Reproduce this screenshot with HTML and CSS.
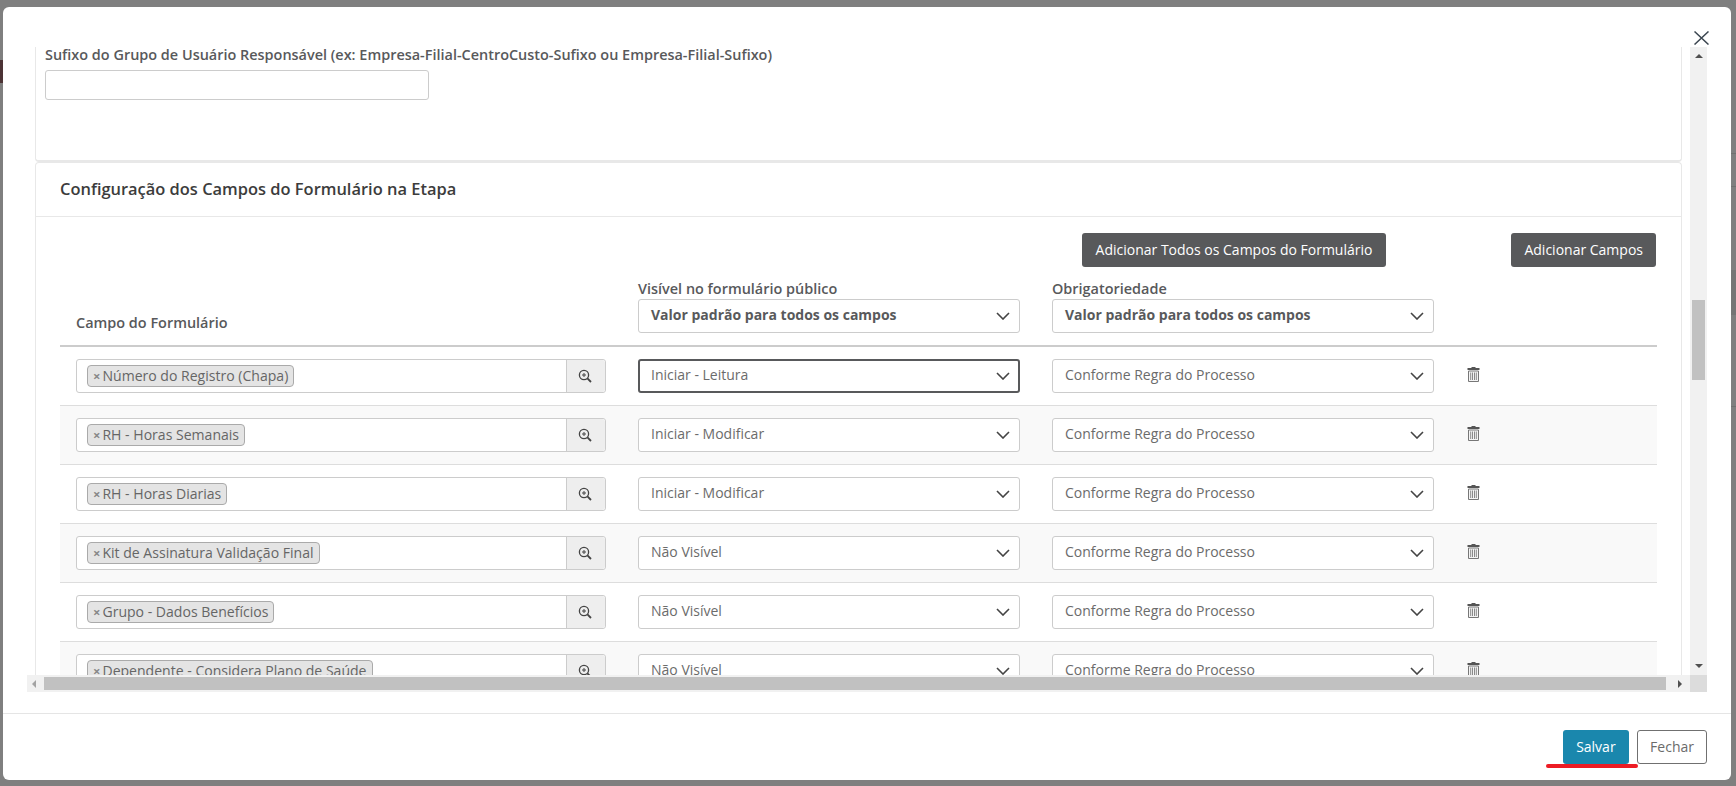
FILE: index.html
```html
<!DOCTYPE html>
<html lang="pt-BR">
<head>
<meta charset="utf-8">
<title>Configuração dos Campos do Formulário na Etapa</title>
<link rel="stylesheet" href="styles.css">
</head>
<body>
<svg class="defs" width="0" height="0" aria-hidden="true">
  <symbol id="chev" viewBox="0 0 14 8"><path d="M1 1l6 6 6-6" fill="none" stroke="currentColor" stroke-width="1.6"/></symbol>
  <symbol id="zoom" viewBox="0 0 14 14"><circle cx="6" cy="6" r="4.6" fill="none" stroke="currentColor" stroke-width="1.3"/><path d="M6 4v4M4 6h4" stroke="currentColor" stroke-width="1"/><path d="M9.4 9.4l3.6 3.6" stroke="currentColor" stroke-width="1.8"/></symbol>
  <symbol id="trash" viewBox="0 0 13 16"><path d="M4.5 1h4v1h4v2H.5V2h4z" fill="#555"/><path d="M1.5 5h10v10.500h-10z" fill="#f4f4f4" stroke="#777"/><path d="M3.700 6.500v7.500M5.500 6.500v7.500M7.500 6.500v7.500M9.300 6.500v7.500" stroke="#8a8a8a"/></symbol>
</svg>

<div class="bg-mark bg-left"></div>
<div class="bg-mark bg-right"></div>
<div class="bg-line bg-l1"></div>
<div class="bg-line bg-l2"></div>
<div class="bg-line bg-l3"></div>

<main class="modal">
  <header class="modal-head">
    <svg class="close" viewBox="0 0 15 14" aria-label="Fechar"><path d="M.5.500l14 13M14.500.500l-14 13" fill="none" stroke="#3b4650" stroke-width="1.500"/></svg>
  </header>

  <div class="scroll-area">
    <div class="viewport">
      <section class="panel panel-top">
        <label class="field-label">Sufixo do Grupo de Usuário Responsável (ex: Empresa-Filial-CentroCusto-Sufixo ou Empresa-Filial-Sufixo)</label>
        <div class="text-input"></div>
      </section>

      <section class="panel panel-fields">
        <h2 class="panel-title">Configuração dos Campos do Formulário na Etapa</h2>
        <div class="panel-body">
          <div class="toolbar">
            <button class="btn btn-dark btn-wide">Adicionar Todos os Campos do Formulário</button>
            <button class="btn btn-dark">Adicionar Campos</button>
          </div>

          <div class="row row-head">
            <div class="head-label head-first">Campo do Formulário</div>
            <div>
              <div class="head-label">Visível no formulário público</div>
              <div class="select select-strong"><span>Valor padrão para todos os campos</span><svg class="chev"><use href="#chev"/></svg></div>
            </div>
            <div>
              <div class="head-label">Obrigatoriedade</div>
              <div class="select select-strong"><span>Valor padrão para todos os campos</span><svg class="chev"><use href="#chev"/></svg></div>
            </div>
            <div></div>
          </div>

          <div class="row">
            <div class="lookup"><div class="lookup-main"><span class="tag"><span class="tag-x">×</span>Número do Registro (Chapa)</span></div><div class="lookup-btn"><svg class="zoom"><use href="#zoom"/></svg></div></div>
            <div class="select select-focus"><span>Iniciar - Leitura</span><svg class="chev"><use href="#chev"/></svg></div>
            <div class="select"><span>Conforme Regra do Processo</span><svg class="chev"><use href="#chev"/></svg></div>
            <svg class="trash"><use href="#trash"/></svg>
          </div>
          <div class="row">
            <div class="lookup"><div class="lookup-main"><span class="tag"><span class="tag-x">×</span>RH - Horas Semanais</span></div><div class="lookup-btn"><svg class="zoom"><use href="#zoom"/></svg></div></div>
            <div class="select"><span>Iniciar - Modificar</span><svg class="chev"><use href="#chev"/></svg></div>
            <div class="select"><span>Conforme Regra do Processo</span><svg class="chev"><use href="#chev"/></svg></div>
            <svg class="trash"><use href="#trash"/></svg>
          </div>
          <div class="row">
            <div class="lookup"><div class="lookup-main"><span class="tag"><span class="tag-x">×</span>RH - Horas Diarias</span></div><div class="lookup-btn"><svg class="zoom"><use href="#zoom"/></svg></div></div>
            <div class="select"><span>Iniciar - Modificar</span><svg class="chev"><use href="#chev"/></svg></div>
            <div class="select"><span>Conforme Regra do Processo</span><svg class="chev"><use href="#chev"/></svg></div>
            <svg class="trash"><use href="#trash"/></svg>
          </div>
          <div class="row">
            <div class="lookup"><div class="lookup-main"><span class="tag"><span class="tag-x">×</span>Kit de Assinatura Validação Final</span></div><div class="lookup-btn"><svg class="zoom"><use href="#zoom"/></svg></div></div>
            <div class="select"><span>Não Visível</span><svg class="chev"><use href="#chev"/></svg></div>
            <div class="select"><span>Conforme Regra do Processo</span><svg class="chev"><use href="#chev"/></svg></div>
            <svg class="trash"><use href="#trash"/></svg>
          </div>
          <div class="row">
            <div class="lookup"><div class="lookup-main"><span class="tag"><span class="tag-x">×</span>Grupo - Dados Benefícios</span></div><div class="lookup-btn"><svg class="zoom"><use href="#zoom"/></svg></div></div>
            <div class="select"><span>Não Visível</span><svg class="chev"><use href="#chev"/></svg></div>
            <div class="select"><span>Conforme Regra do Processo</span><svg class="chev"><use href="#chev"/></svg></div>
            <svg class="trash"><use href="#trash"/></svg>
          </div>
          <div class="row">
            <div class="lookup"><div class="lookup-main"><span class="tag"><span class="tag-x">×</span>Dependente - Considera Plano de Saúde</span></div><div class="lookup-btn"><svg class="zoom"><use href="#zoom"/></svg></div></div>
            <div class="select"><span>Não Visível</span><svg class="chev"><use href="#chev"/></svg></div>
            <div class="select"><span>Conforme Regra do Processo</span><svg class="chev"><use href="#chev"/></svg></div>
            <svg class="trash"><use href="#trash"/></svg>
          </div>
        </div>
      </section>
    </div>

    <div class="vbar">
      <span class="arrow arrow-up"></span>
      <div class="vtrack"><div class="vthumb"></div></div>
      <span class="arrow arrow-down"></span>
    </div>
    <div class="hbar">
      <span class="arrow arrow-left"></span>
      <div class="hthumb"></div>
      <span class="arrow arrow-right"></span>
    </div>
    <div class="corner"></div>
  </div>

  <footer class="modal-foot">
    <button class="btn btn-primary">Salvar</button>
    <button class="btn btn-outline">Fechar</button>
    <div class="annotation"></div>
  </footer>
</main>
</body>
</html>
```

FILE: styles.css
```css
* { box-sizing: border-box; }

html, body {
  margin: 0;
  height: 100%;
}

body {
  background: #7f7f7f;
  overflow: hidden;
  font-family: "Open Sans", "Noto Sans", sans-serif;
  font-size: 14px;
  color: #58595b;
}

.defs { position: absolute; }

.bg-mark { position: absolute; }
.bg-left { left: 0; top: 60px; width: 3px; height: 23px; background: #4c3335; }
.bg-right { right: 0; top: 270px; width: 5px; height: 45px; background: #757575; }
.bg-line { position: absolute; right: 0; width: 5px; height: 1px; background: #707070; }
.bg-l1 { top: 153px; }
.bg-l2 { top: 186px; }
.bg-l3 { top: 406px; }

.modal {
  position: absolute;
  left: 3px;
  top: 7px;
  width: 1728px;
  height: 773px;
  background: #fff;
  border-radius: 6px;
  display: flex;
  flex-direction: column;
}

.modal-head {
  height: 40px;
  flex: none;
  display: flex;
  justify-content: flex-end;
  align-items: flex-start;
  padding: 24px 22px 0 0;
}

.close { width: 15px; height: 14px; display: block; }

.scroll-area {
  flex: 1;
  min-height: 0;
  margin: 0 24px;
  display: grid;
  grid-template-columns: 1fr 17px;
  grid-template-rows: 1fr 17px;
}

.viewport {
  overflow: hidden;
  padding: 0 8px;
  min-height: 0;
}

.panel {
  background: #fff;
  border: 1px solid #e8e8e8;
}

.panel-top {
  border-top: 0;
  border-bottom-width: 2px;
  border-radius: 0 0 4px 4px;
  height: 115px;
  padding: 0 8px 0 9px;
}

.field-label {
  display: block;
  font-weight: 600;
  font-size: 14.45px;
  line-height: 16px;
  margin-bottom: 7px;
  color: #58595b;
  white-space: nowrap;
}

.text-input {
  width: 384px;
  height: 30px;
  border: 1px solid #ccc;
  border-radius: 3px;
  background: #fff;
}

.panel-fields {
  border-radius: 4px 4px 0 0;
  border-bottom: 0;
  border-top-width: 1px;
}

.panel-title {
  margin: 0;
  height: 54px;
  padding-left: 24px;
  font-size: 16.45px;
  font-weight: 600;
  line-height: 52px;
  color: #3c3c3c;
  border-bottom: 1px solid #e8e8e8;
}

.panel-body { padding: 16px 24px 0 24px; }

.toolbar {
  display: flex;
  justify-content: flex-end;
  gap: 125px;
  padding-right: 1px;
}

.btn {
  font-family: inherit;
  font-size: 14px;
  height: 34px;
  padding: 0 12px 2px;
  border-radius: 3px;
  border: 1px solid transparent;
  display: block;
}

.btn-wide { padding-left: 13px; padding-right: 13px; }
.btn-dark { background: #58595b; color: #fff; }
.btn-primary { background: #1a87ad; color: #fff; padding-left: 12.500px; padding-right: 12.500px; }
.btn-outline { background: #fff; color: #6b6b6b; border-color: #707070; }

.row {
  display: grid;
  grid-template-columns: 530px 382px 382px 1fr;
  column-gap: 32px;
  padding: 12px 16px;
  border-bottom: 1px solid #ddd;
  align-items: center;
}

.row:nth-child(even) { background: #f9f9f9; }

.row-head.row-head {
  align-items: end;
  padding-top: 13px;
  padding-bottom: 12px;
  border-bottom: 2px solid #ccc;
  background: #fff;
}

.head-label {
  font-weight: 600;
  font-size: 14.45px;
  line-height: 18px;
  margin-bottom: 1px;
  color: #58595b;
  white-space: nowrap;
}

.select {
  height: 34px;
  border: 1px solid #ccc;
  border-radius: 3px;
  background: #fff;
  display: flex;
  align-items: center;
  justify-content: space-between;
  padding: 0 9px 0 12px;
  font-size: 14px;
  color: #6b6b6b;
}

.select span { margin-bottom: 3px; }

.select-strong { font-weight: 700; color: #58595b; }
.select-focus { border: 2px solid #58595b; padding-left: 11px; padding-right: 8px; }

.chev { width: 14px; height: 8px; color: #444; flex: none; }

.lookup {
  display: flex;
  height: 34px;
  border: 1px solid #ccc;
  border-radius: 3px;
  background: #fff;
}

.lookup-main {
  flex: 1;
  padding: 5px 0 0 10px;
  overflow: hidden;
}

.lookup-btn {
  width: 39px;
  flex: none;
  background: #eee;
  border-left: 1px solid #ccc;
  display: flex;
  align-items: center;
  justify-content: center;
  padding-right: 2px;
  border-radius: 0 3px 3px 0;
}

.zoom { width: 14px; height: 14px; color: #444; display: block; }

.tag {
  display: inline-block;
  height: 22px;
  line-height: 19px;
  border: 1px solid #aaa;
  border-radius: 4px;
  background: #e4e4e4;
  font-size: 14.05px;
  color: #666;
  padding: 0 5px;
  white-space: nowrap;
}

.tag-x { color: #888; font-weight: 700; font-size: 13px; margin-right: 2px; }

.trash {
  width: 13px;
  height: 16px;
  display: block;
  align-self: start;
  margin: 7px 0 0 1px;
}

.vbar {
  background: #f1f1f1;
  display: flex;
  flex-direction: column;
  align-items: center;
  padding-top: 7px;
}

.vtrack { flex: 1; width: 100%; padding: 0 2px; }
.vthumb { width: 13px; height: 80px; margin-top: 242px; background: #c1c1c1; }

.hbar {
  background: #f1f1f1;
  display: flex;
  align-items: center;
  padding-left: 5px;
}

.hthumb {
  width: 1622px;
  height: 13px;
  margin: 0 12px 0 8px;
  background: #c1c1c1;
}

.corner { background: #dcdcdc; }

.arrow { display: block; width: 0; height: 0; border-style: solid; border-color: transparent; flex: none; }
.arrow-up { border-width: 0 4px 4px; border-bottom-color: #505050; }
.arrow-down { border-width: 4px 4px 0; border-top-color: #505050; margin-bottom: 7px; }
.arrow-left { border-width: 4px 4px 4px 0; border-right-color: #a3a3a3; }
.arrow-right { border-width: 4px 0 4px 4px; border-left-color: #505050; }

.modal-foot {
  position: relative;
  flex: none;
  margin-top: 21px;
  border-top: 1px solid #e5e5e5;
  padding: 16px 24px;
  display: flex;
  justify-content: flex-end;
  gap: 8px;
}

.annotation {
  position: absolute;
  left: 1543px;
  top: 50px;
  width: 92px;
  height: 4px;
  border-radius: 2px;
  background: #ed1c24;
}
```
